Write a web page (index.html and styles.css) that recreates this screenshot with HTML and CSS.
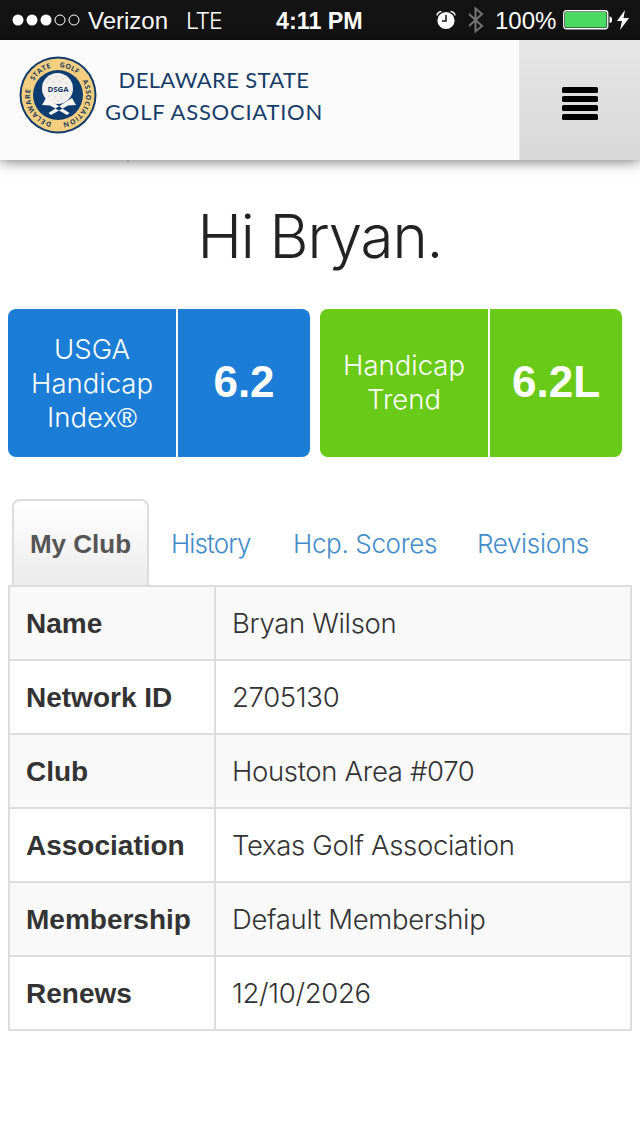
FILE: index.html
```html
<!DOCTYPE html>
<html lang="en">
<head>
<meta charset="utf-8">
<title>Delaware State Golf Association</title>
<link rel="stylesheet" href="styles.css">
</head>
<body>
<div class="status">
  <svg class="signal" width="68" height="12" viewBox="0 0 68 12"><g fill="#fff"><circle cx="6" cy="6" r="5.5"/><circle cx="20" cy="6" r="5.5"/><circle cx="34" cy="6" r="5.5"/></g><g fill="none" stroke="#fff"><circle cx="48" cy="6" r="5"/><circle cx="62" cy="6" r="5"/></g></svg>
  <span class="carrier">Verizon</span>
  <span class="network">LTE</span>
  <span class="clock">4:11 PM</span>
  <svg class="alarm" width="20" height="20" viewBox="0 0 20 20"><circle cx="10" cy="10.5" r="8.6" fill="#fff"/><path d="M1 5.5Q1.5 2 5.500 1.500M14.500 1.500Q18.500 2 19 5.500" fill="none" stroke="#fff" stroke-width="1.500"/><path d="M10 5v6H6" fill="none" stroke="#131313" stroke-width="1.500"/></svg>
  <svg class="bluetooth" width="16" height="26" viewBox="0 0 16 26"><path d="M1 7l13 12-6.500 5.500V1.500L14 7 1 19" fill="none" stroke="#747474" stroke-width="2"/></svg>
  <span class="percent">100%</span>
  <svg class="battery" width="50" height="20" viewBox="0 0 50 20"><rect x=".75" y=".75" width="44" height="18" rx="2.500" fill="none" stroke="#fff" stroke-width="1.300"/><rect x="2" y="2" width="41.500" height="15.500" rx="1" fill="#4cd964"/><path d="M46.500 6.500q2.500 0 2.500 3.200t-2.500 3.200z" fill="#fff"/></svg>
  <svg class="bolt" width="12" height="20" viewBox="0 0 12 20"><path d="M8 0L0 11h5L3 20 12 8H6.500z" fill="#fff"/></svg>
</div>
<header class="header">
  <div class="brand">
    <svg class="logo" width="80" height="80" viewBox="0 0 80 80">
      <defs><path id="ring" d="M40 68A28 28 0 0 1 40 12A28 28 0 0 1 40 68"/></defs>
      <circle cx="40" cy="40" r="38.500" fill="#123c6b"/>
      <circle cx="40" cy="40" r="36.500" fill="#f5cf80"/>
      <circle cx="40" cy="40" r="25" fill="#0d3c70"/>
      <g class="ring-text">
        <text><textPath href="#ring" startOffset="6.400" textLength="43">DELAWARE</textPath></text>
        <text><textPath href="#ring" startOffset="58.600" textLength="22">STATE</textPath></text>
        <text><textPath href="#ring" startOffset="89.400" textLength="19">GOLF</textPath></text>
        <text><textPath href="#ring" startOffset="116.800" textLength="54">ASSOCIATION</textPath></text>
      </g>
      <path d="M28 43l-4 7 8 .5L49 60l2.500-2L36 48zM54 43l4 7-8 .5L33 60l-2.500-2L46 48z" fill="#f5f5f3"/>
      <circle cx="39.500" cy="33.500" r="15.500" fill="#f1f0ed"/>
      <g fill="#dcdddc"><circle cx="32" cy="24" r="1"/><circle cx="38" cy="22" r="1"/><circle cx="45" cy="24" r="1"/><circle cx="29" cy="28" r="1"/><circle cx="49" cy="28" r="1"/><circle cx="35" cy="27" r="1"/><circle cx="42" cy="26" r="1"/><circle cx="31" cy="41" r="1"/><circle cx="37" cy="42" r="1"/><circle cx="43" cy="42" r="1"/><circle cx="48" cy="40" r="1"/><circle cx="40" cy="46" r="1"/></g>
      <text class="logo-name" x="40" y="36.500" text-anchor="middle">DSGA</text>
    </svg>
    <div class="brand-name"><div class="brand-a">DELAWARE STATE</div><div class="brand-b">GOLF ASSOCIATION</div></div>
  </div>
  <div class="menu">
    <svg width="36" height="34" viewBox="0 0 36 34"><g fill="#000"><rect y="0" width="36" height="6" rx="1.500"/><rect y="9" width="36" height="6" rx="1.500"/><rect y="18" width="36" height="6" rx="1.500"/><rect y="27" width="36" height="6" rx="1.500"/></g></svg>
  </div>
</header>
<main class="main">
  <h1 class="greeting">Hi Bryan.</h1>
  <div class="cards">
    <div class="card blue"><div class="label"><div>USGA<br>Handicap<br>Index<span class="mark">®</span></div></div><div class="value">6.2</div></div>
    <div class="card green"><div class="label trend"><div>Handicap<br>Trend</div></div><div class="value">6.2L</div></div>
  </div>
  <nav class="tabs">
    <div class="tab active">My Club</div>
    <div class="tab history">History</div>
    <div class="tab scores">Hcp. Scores</div>
    <div class="tab revisions">Revisions</div>
  </nav>
  <table class="club">
    <tr><th>Name</th><td>Bryan Wilson</td></tr>
    <tr><th>Network ID</th><td>2705130</td></tr>
    <tr><th>Club</th><td>Houston Area #070</td></tr>
    <tr><th>Association</th><td>Texas Golf Association</td></tr>
    <tr><th>Membership</th><td>Default Membership</td></tr>
    <tr><th>Renews</th><td>12/10/2026</td></tr>
  </table>
</main>
</body>
</html>
```
FILE: styles.css
```css
* { box-sizing: border-box; }
body { margin: 0; background: #fff; color: #333; font-family: Inter, "Liberation Sans", sans-serif; font-weight: 300; width: 640px; height: 1136px; overflow: hidden; }
svg { display: block; flex: none; }
.status { height: 40px; background: #131313; color: #fff; display: flex; align-items: center; font: 24px/40px "Liberation Sans", sans-serif; white-space: nowrap; }
.status span { flex: none; display: block; height: 40px; padding-top: 1px; }
.signal { margin-left: 12px; }
.carrier { margin-left: 8px; width: 98px; }
.network { width: 90px; font-family: Inter, sans-serif; font-weight: 300; font-size: 23px; letter-spacing: -1.2px; }
.clock { width: 160px; font-weight: 700; font-size: 23.3px; }
.bluetooth { margin-left: 12px; }
.percent { margin-left: 11px; width: 68px; }
.bolt { margin-left: 4px; }
.header { position: relative; height: 120px; background: #fafafa; display: flex; justify-content: space-between; box-shadow: 0 2px 12px rgba(0,0,0,.5); }
.header::after { content: ""; position: absolute; left: 127px; top: 120px; width: 2px; height: 3px; background: rgba(0,0,0,.13); }
.brand { display: flex; padding: 15px 0 0 18px; }
.brand-name { width: 230px; margin-left: 1px; color: #173d69; font: 22px/32px Lato, sans-serif; text-align: center; padding-top: 9px; white-space: nowrap; }
.brand-a { letter-spacing: .35px; }
.brand-b { letter-spacing: .75px; }
.ring-text { font: 700 7px "Open Sans", sans-serif; fill: #24415f; }
.logo-name { font: 700 7.8px "Open Sans", sans-serif; fill: #173b68; }
.menu { width: 121px; background: linear-gradient(#e6e6e6, #d8d8d8); padding: 47px 0 0 42px; border-left: 1px solid #e9e9e9; }
.main { padding: 0 8px; }
.greeting { margin: 0; padding-top: 40px; height: 149px; font-size: 60px; line-height: 72px; font-weight: 300; letter-spacing: -1.1px; text-align: center; color: #222; }
.cards { display: flex; gap: 10px; height: 148px; }
.card { width: 302px; display: flex; border-radius: 8px; color: #fff; }
.blue { background: #1c7dd6; }
.green { background: #69ca17; }
.label { width: 168px; display: flex; align-items: center; justify-content: center; text-align: center; font-size: 27.5px; line-height: 34px; letter-spacing: 0; }
.mark { font: 27px/20px "Liberation Sans", sans-serif; }
.trend { padding-bottom: 2px; }
.value { flex: 1; border-left: 2px solid #fff; display: flex; align-items: center; justify-content: center; font: 700 44px/50px "Liberation Sans", sans-serif; padding-bottom: 2px; }
.tabs { margin-top: 42px; height: 86px; display: flex; font-size: 26px; line-height: 30px; letter-spacing: -.35px; color: #428bca; padding-left: 4px; white-space: nowrap; }
.tab { padding-top: 30px; flex: none; }
.active { width: 137px; margin-right: 22px; border: 2px solid #ddd; border-bottom: 0; border-radius: 8px 8px 0 0; background: linear-gradient(#fff, #ebebeb); color: #555; font: 700 26px/30px "Liberation Sans", sans-serif; letter-spacing: 0; text-align: center; padding-top: 28px; }
.history { width: 122px; letter-spacing: -.9px; }
.scores { width: 184px; }
.club { width: 624px; border-collapse: collapse; table-layout: fixed; }
.club tr { height: 74px; }
.club tr:nth-child(odd) { background: #f9f9f9; }
.club th, .club td { border: 2px solid #ddd; padding: 0 16px; text-align: left; line-height: 34px; white-space: nowrap; }
.club th { width: 206px; font: 700 28px/34px "Liberation Sans", sans-serif; padding-top: 2px; }
.club td { font-size: 27.5px; letter-spacing: -.33px; }
```
